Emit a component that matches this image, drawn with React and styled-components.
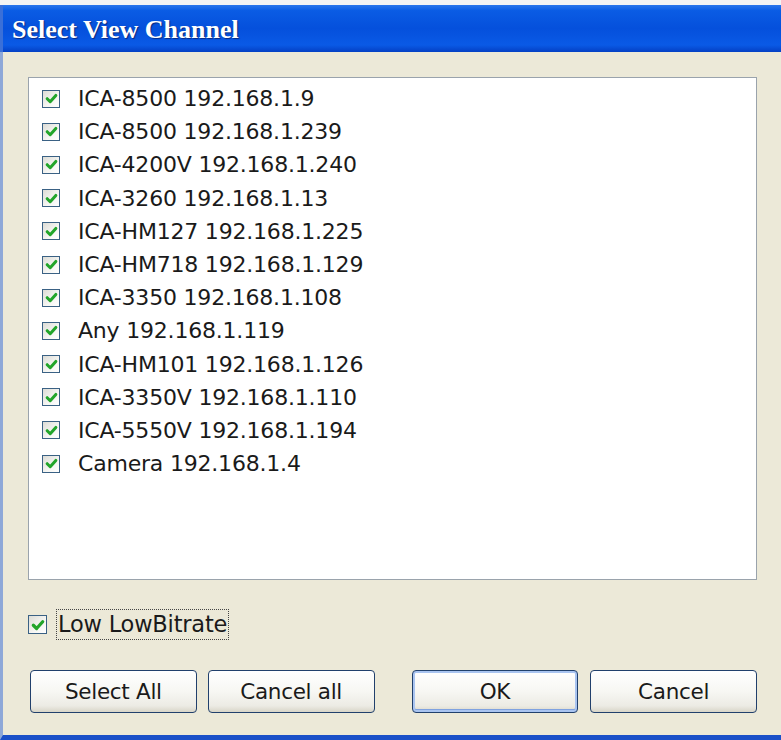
import styled, { createGlobalStyle } from "styled-components";

const GlobalStyle = createGlobalStyle`
  html, body {
    margin: 0;
    padding: 0;
    background: #f4f4f4;
  }
  * { box-sizing: border-box; }
`;

const Window = styled.div`
  width: 781px;
  height: 740px;
  padding-top: 5px;
  display: flex;
  flex-direction: column;
  font-family: "DejaVu Sans", sans-serif;
  color: #1a1a1a;
`;

const TitleBar = styled.div`
  height: 47px;
  display: flex;
  align-items: center;
  padding-left: 9px;
  background: linear-gradient(
    to bottom,
    #2a76ec 0%,
    #0a5ce4 12%,
    #0550dc 50%,
    #0a5ae6 85%,
    #0440c4 100%
  );
  border-left: 3px solid #3a6fd8;
`;

const Title = styled.div`
  font-family: "Liberation Serif", serif;
  font-weight: 700;
  font-size: 26px;
  color: #ffffff;
  text-shadow: 1px 1px 1px #0a2a80;
  padding-top: 3px;
`;

const Body = styled.div`
  flex: 1;
  background: #ece9d8;
  border-left: 3px solid #8ea8d8;
  border-bottom: 5px solid #1a50c8;
  padding: 25px 24px 0 25px;
  display: flex;
  flex-direction: column;
`;

const ListBox = styled.div`
  height: 503px;
  flex: none;
  background: #ffffff;
  border: 1px solid #9aa3ac;
  padding: 4px 0 0 13px;
  display: flex;
  flex-direction: column;
`;

const Row = styled.label`
  height: 33.2px;
  display: flex;
  align-items: center;
  gap: 18px;
  font-size: 22px;
  letter-spacing: -0.2px;
`;

const Box = styled.span`
  width: ${(p) => p.$size}px;
  height: ${(p) => p.$size}px;
  flex: none;
  border: 1.5px solid #3a6184;
  background: linear-gradient(135deg, #dcdcd6 0%, #f6f6f3 60%, #ffffff 100%);
  display: flex;
  align-items: center;
  justify-content: center;
`;

const Check = ({ size = 18 }) => (
  <Box $size={size}>
    <svg width={size - 5} height={size - 5} viewBox="0 0 12 12">
      <path
        d="M2 6.2 L4.8 9 L10 3.2"
        fill="none"
        stroke="#22a52a"
        strokeWidth="2.8"
        strokeLinecap="round"
        strokeLinejoin="round"
      />
    </svg>
  </Box>
);

const Option = styled.label`
  margin-top: 29px;
  display: flex;
  align-items: center;
  gap: 9px;
  font-size: 22.5px;
  letter-spacing: -0.2px;
`;

const FocusText = styled.span`
  border: 1px dotted #444;
  padding: 1px 1px 2px 1px;
`;

const Buttons = styled.div`
  margin-top: 30px;
  display: flex;
  align-items: center;
`;

const Button = styled.button`
  width: 167px;
  height: 43px;
  margin-left: ${(p) => p.$gap}px;
  border: 1.5px solid #21406c;
  border-radius: 4px;
  background: linear-gradient(to bottom, #ffffff 0%, #f7f7f3 50%, #ecebe4 85%, #d8d5c8 100%);
  font-family: "DejaVu Sans", sans-serif;
  font-size: 21.5px;
  letter-spacing: -0.3px;
  color: #1a1a1a;
  box-shadow: ${(p) =>
    p.$default ? "inset 0 0 0 2px #a9c4f0, inset 0 -1px 0 2px #7fa2e0" : "none"};
`;

const channels = [
  "ICA-8500 192.168.1.9",
  "ICA-8500 192.168.1.239",
  "ICA-4200V 192.168.1.240",
  "ICA-3260 192.168.1.13",
  "ICA-HM127 192.168.1.225",
  "ICA-HM718 192.168.1.129",
  "ICA-3350 192.168.1.108",
  "Any 192.168.1.119",
  "ICA-HM101 192.168.1.126",
  "ICA-3350V 192.168.1.110",
  "ICA-5550V 192.168.1.194",
  "Camera 192.168.1.4",
];

export default function App() {
  return (
    <>
      <GlobalStyle />
      <Window>
        <TitleBar>
          <Title>Select View Channel</Title>
        </TitleBar>
        <Body>
          <ListBox>
            {channels.map((c) => (
              <Row key={c}>
                <Check />
                <span>{c}</span>
              </Row>
            ))}
          </ListBox>
          <Option>
            <Check size={19} />
            <FocusText>Low LowBitrate</FocusText>
          </Option>
          <Buttons>
            <Button $gap={2}>Select All</Button>
            <Button $gap={11}>Cancel all</Button>
            <Button $gap={37} $default>OK</Button>
            <Button $gap={12}>Cancel</Button>
          </Buttons>
        </Body>
      </Window>
    </>
  );
}
